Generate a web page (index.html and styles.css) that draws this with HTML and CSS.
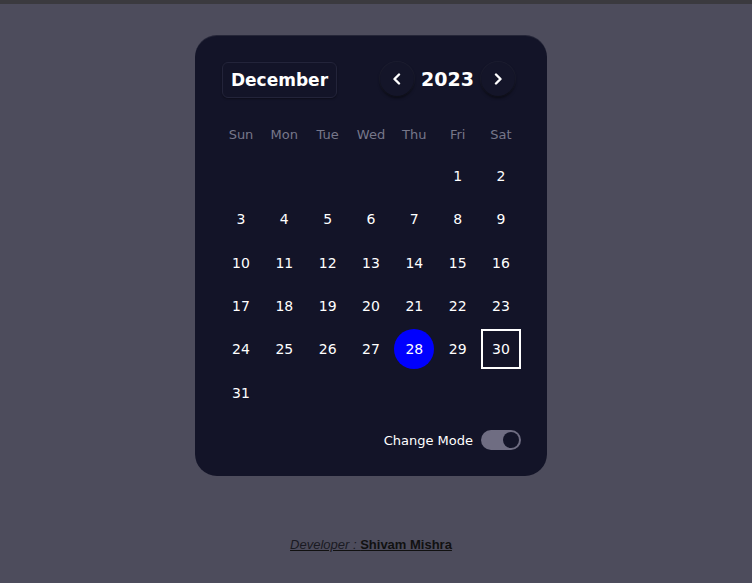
FILE: index.html
```html
<!DOCTYPE html>
<html lang="en">
<head>
<meta charset="utf-8">
<title>Calendar</title>
<link rel="stylesheet" href="styles.css">
</head>
<body>
<div class="topbar"></div>
<main class="page">
  <section class="calendar">
    <header class="cal-header">
      <button class="month-btn">December</button>
      <div class="year-nav">
        <button class="nav-btn" aria-label="Previous year">
          <svg width="12" height="12" viewBox="0 0 12 12"><path d="M8 1.5 L3.5 6 L8 10.5" fill="none" stroke="#fff" stroke-width="2.4" stroke-linecap="round" stroke-linejoin="round"/></svg>
        </button>
        <span class="year">2023</span>
        <button class="nav-btn" aria-label="Next year">
          <svg width="12" height="12" viewBox="0 0 12 12"><path d="M4 1.5 L8.5 6 L4 10.5" fill="none" stroke="#fff" stroke-width="2.4" stroke-linecap="round" stroke-linejoin="round"/></svg>
        </button>
      </div>
    </header>
    <div class="grid weekdays">
      <div>Sun</div><div>Mon</div><div>Tue</div><div>Wed</div><div>Thu</div><div>Fri</div><div>Sat</div>
    </div>
    <div class="grid days">
      <div></div><div></div><div></div><div></div><div></div>
      <div>1</div><div>2</div>
      <div>3</div><div>4</div><div>5</div><div>6</div><div>7</div><div>8</div><div>9</div>
      <div>10</div><div>11</div><div>12</div><div>13</div><div>14</div><div>15</div><div>16</div>
      <div>17</div><div>18</div><div>19</div><div>20</div><div>21</div><div>22</div><div>23</div>
      <div>24</div><div>25</div><div>26</div><div>27</div><div class="selected">28</div><div>29</div><div class="today">30</div>
      <div>31</div>
    </div>
    <div class="mode-row">
      <span class="mode-label">Change Mode</span>
      <span class="toggle"><span class="knob"></span></span>
    </div>
  </section>
  <p class="credit"><span class="dev">Developer : </span><strong>Shivam Mishra</strong></p>
</main>
</body>
</html>
```
FILE: styles.css
```css
* { box-sizing: border-box; }
html, body { margin: 0; padding: 0; }
body {
  background: #4d4c5c;
  height: 583px;
  overflow: hidden;
  font-family: "Comic Sans MS", "DejaVu Sans", sans-serif;
}
.topbar { height: 4px; background: #3b3a3f; }
.page {
  display: flex;
  flex-direction: column;
  align-items: center;
  padding-top: 31px;
  padding-right: 10px;
}
.calendar {
  width: 352px;
  height: 441px;
  background: #131428;
  border-radius: 22px;
  padding: 27px 26px 26px;
  box-shadow: inset 0 1px 0 rgba(255,255,255,0.08);
  display: flex;
  flex-direction: column;
  color: #fff;
}
.cal-header {
  display: flex;
  justify-content: space-between;
  align-items: center;
  height: 36px;
}
.month-btn {
  font-family: inherit;
  font-size: 17px;
  font-weight: bold;
  color: #fff;
  background: #131428;
  border: 1px solid #23243a;
  border-radius: 6px;
  height: 36px;
  width: 115px;
  margin-left: 1px;
  padding: 0;
  box-shadow: 0 1px 2px rgba(0,0,0,0.35);
}
.year-nav {
  display: flex;
  align-items: center;
  gap: 7px;
  margin-right: 6px;
  margin-top: -3px;
}
.nav-btn {
  width: 34px;
  height: 34px;
  border-radius: 50%;
  border: none;
  background: #141529;
  box-shadow: 0 2px 3px rgba(0,0,0,0.55), 0 0 0 1px rgba(255,255,255,0.04);
  display: flex;
  align-items: center;
  justify-content: center;
  padding: 0;
}
.year {
  font-size: 19px;
  font-weight: bold;
  color: #fff;
}
.grid {
  display: grid;
  grid-template-columns: repeat(7, 40px);
  column-gap: 3.33px;
  justify-content: start;
}
.weekdays {
  margin-top: 16px;
  height: 40px;
  color: #77778a;
  font-size: 13px;
}
.weekdays div {
  display: flex;
  align-items: center;
  justify-content: center;
}
.days {
  margin-top: 2px;
  grid-auto-rows: 40px;
  row-gap: 3.33px;
  font-size: 14px;
}
.days div {
  display: flex;
  align-items: center;
  justify-content: center;
}
.days .selected {
  background: #0000fe;
  border-radius: 50%;
}
.days .today {
  border: 2px solid #fff;
}
.mode-row {
  margin-top: auto;
  display: flex;
  justify-content: flex-end;
  align-items: center;
  gap: 8px;
  height: 20px;
}
.mode-label {
  font-size: 13px;
  color: #fff;
}
.toggle {
  width: 40px;
  height: 20px;
  border-radius: 10px;
  background: #6f6d82;
  display: flex;
  align-items: center;
  justify-content: flex-end;
  padding-right: 2px;
}
.knob {
  width: 16px;
  height: 16px;
  border-radius: 50%;
  background: #131428;
}
.credit {
  margin: 61px 0 0;
  font-family: "Liberation Sans", Arial, sans-serif;
  font-size: 13px;
  color: #111;
  text-decoration: underline;
}
.dev { font-style: italic; color: #1a1a22; }
.credit strong { font-weight: bold; }
```
